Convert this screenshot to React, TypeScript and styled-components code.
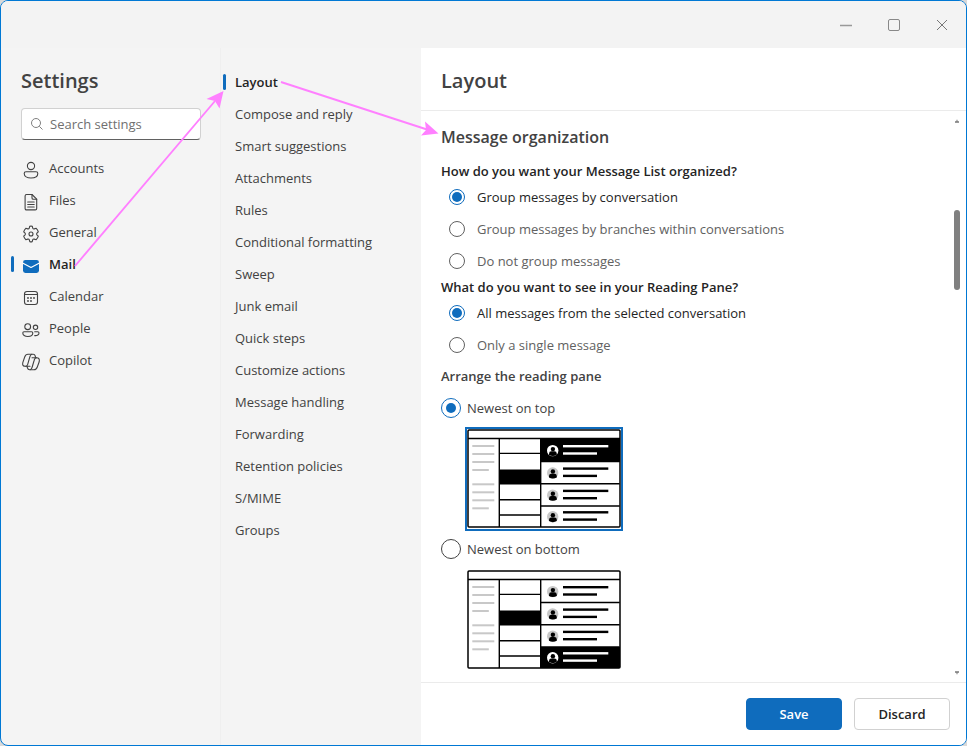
import React, { useState } from "react";
import styled, { createGlobalStyle, css } from "styled-components";

const BLUE = "#0f6cbd";
const INK = "#424242";

const GlobalStyle = createGlobalStyle`
  * { box-sizing: border-box; }
  html, body { margin: 0; padding: 0; background: #d9d9d9; }
  body, button, input {
    font-family: "Open Sans", "Noto Sans", sans-serif;
    font-size: 13px;
    line-height: 20px;
    color: ${INK};
  }
`;

const Window = styled.div`
  position: relative;
  display: flex;
  flex-direction: column;
  min-height: 100vh;
  border: 1px solid #0078d4;
  border-radius: 8px;
  background: #f4f4f4;
  overflow: hidden;
`;

const TitleBar = styled.header`
  display: flex;
  justify-content: flex-end;
  height: 47px;
  background: #f3f3f3;
`;

const CaptionButton = styled.button`
  display: grid;
  place-items: center;
  width: 48px;
  padding: 0;
  border: 0;
  background: none;
`;

const Body = styled.div`
  display: grid;
  grid-template-columns: 220px 200px minmax(0, 1fr);
  flex: 1;
`;

const Sidebar = styled.nav`
  display: flex;
  flex-direction: column;
  border-right: 1px solid #efefef;
`;

const Title = styled.h1`
  margin: 0;
  padding: 19px 20px 13px;
  font-size: 20px;
  line-height: 28px;
  font-weight: 600;
`;

const SearchBox = styled.label`
  display: flex;
  align-items: center;
  gap: 6px;
  height: 32px;
  margin: 0 19px 12px 20px;
  padding: 0 8px;
  border: 1px solid #d1d1d1;
  border-bottom-color: #616161;
  border-radius: 4px;
  background: #fff;
`;

const SearchInput = styled.input`
  flex: 1;
  min-width: 0;
  padding: 0;
  border: 0;
  outline: 0;
  background: none;
  &::placeholder { color: #707070; opacity: 1; }
`;

const NavLink = styled.a<{ $active?: boolean; $compact?: boolean }>`
  display: flex;
  align-items: center;
  height: 32px;
  padding-left: ${(p) => (p.$compact ? 2 : 10)}px;
  color: ${INK};
  text-decoration: none;
  &::before {
    content: "";
    width: 3px;
    height: 16px;
    margin-right: ${(p) => (p.$compact ? 9 : 8)}px;
    border-radius: 2px;
  }
  ${(p) =>
    p.$active &&
    css`
      color: #242424;
      font-weight: 600;
      &::before { background: ${BLUE}; }
    `}
`;

const NavIcon = styled.svg`
  width: 18px;
  height: 18px;
  margin: 4px 9px 0 0;
  flex: none;
  overflow: visible;
  fill: none;
  stroke: #424242;
  stroke-width: 1.1;
  stroke-linecap: round;
  stroke-linejoin: round;
`;

const SubNav = styled.nav`
  padding-top: 18px;
`;

const Pane = styled.main`
  display: flex;
  flex-direction: column;
  background: #fff;
`;

const PaneHeader = styled.div`
  border-bottom: 1px solid #ebebeb;
  height: 63px;
`;

const ScrollArea = styled.div`
  display: flex;
  flex: 1;
`;

const Content = styled.div`
  flex: 1;
  padding: 14px 20px 2px;
`;

const ScrollTrack = styled.div`
  display: flex;
  flex-direction: column;
  align-items: center;
  width: 18px;
  padding: 8px 0 7px;
`;

const Thumb = styled.div`
  width: 6px;
  height: 80px;
  margin: 87px 0 auto;
  border-radius: 3px;
  background: #808080;
`;

const SectionTitle = styled.h2`
  margin: 0 0 12px;
  font-size: 16px;
  line-height: 24px;
  font-weight: 600;
`;

const Group = styled.fieldset`
  margin: 0;
  padding: 0;
  border: 0;
`;

const Question = styled.legend<{ $soft?: boolean }>`
  padding: ${(p) => (p.$soft ? "5px 0 12px" : 0)};
  font-weight: 600;
  color: ${(p) => (p.$soft ? INK : "#242424")};
`;

const Option = styled.label<{ $checked: boolean }>`
  display: flex;
  align-items: center;
  gap: 12px;
  height: 32px;
  padding-left: 8px;
  color: ${(p) => (p.$checked ? "#242424" : "#616161")};
`;

const LargeOption = styled.label`
  display: flex;
  align-items: center;
  gap: 6px;
  height: 20px;
`;

const Radio = styled.input.attrs({ type: "radio" })<{ $large?: boolean }>`
  appearance: none;
  display: grid;
  place-items: center;
  flex: none;
  width: ${(p) => (p.$large ? 20 : 16)}px;
  height: ${(p) => (p.$large ? 20 : 16)}px;
  margin: 0;
  border: 1px solid ${(p) => (p.$large ? "#424242" : "#616161")};
  border-radius: 50%;
  background: #fff;
  &:checked { border-color: ${BLUE}; }
  &:checked::before {
    content: "";
    width: 10px;
    height: 10px;
    border-radius: 50%;
    background: ${BLUE};
  }
`;

const Preview = styled.div<{ $selected: boolean }>`
  width: 158px;
  height: 104px;
  margin: 9px 0 8px 24px;
  border: 2px solid ${(p) => (p.$selected ? BLUE : "transparent")};
`;

const Picture = styled.svg`
  display: block;
  width: 154px;
  height: 99px;
`;

const Footer = styled.footer`
  display: flex;
  justify-content: flex-end;
  gap: 12px;
  padding: 15px 16px;
  border-top: 1px solid #ebebeb;
`;

const Button = styled.button<{ $primary?: boolean }>`
  width: 96px;
  height: 32px;
  padding: 0;
  border: 1px solid ${(p) => (p.$primary ? BLUE : "#d1d1d1")};
  border-radius: 4px;
  background: ${(p) => (p.$primary ? BLUE : "#fff")};
  color: ${(p) => (p.$primary ? "#fff" : "#242424")};
  font-weight: 600;
`;

const Arrows = styled.svg`
  position: absolute;
  top: 0;
  left: 0;
  width: 460px;
  height: 300px;
  pointer-events: none;
`;

const icons: Record<string, React.ReactNode> = {
  Accounts: (
    <>
      <circle cx="9" cy="5" r="3.6" />
      <path d="M4 10.700h10c1 0 1.800.8 1.800 1.800 0 2.800-3 4.500-6.800 4.500s-6.800-1.700-6.800-4.500c0-1 .8-1.800 1.800-1.800z" />
    </>
  ),
  Files: (
    <>
      <path d="M4.500 1.500h5.500l4.700 4.700v9.300c0 .8-.6 1.400-1.400 1.400H4.500c-.8 0-1.400-.6-1.400-1.400V2.900c0-.8.6-1.400 1.400-1.400z" />
      <path d="M10 1.500v3.400c0 .8.500 1.300 1.300 1.300h3.400M5.700 9h6.500M5.700 11.500h6.500M5.700 14h6.500" />
    </>
  ),
  General: (
    <>
      <path d="M7.700 1.300 Q9 1 10.300 1.300 L10.800 3.300 Q11.300 4.100 12.200 3.900 L14.200 3.300 Q15.800 4.900 16.300 6.800 L14.900 8.100 Q14.300 9 14.900 9.900 L16.300 11.200 Q15.700 13.300 14.200 14.700 L12.200 14.100 Q11.100 13.900 10.700 14.800 L10.200 16.700 Q9 17 7.800 16.700 L7.300 14.800 Q6.900 13.900 5.800 14.100 L3.800 14.700 Q2.300 13.200 1.700 11.200 L3.100 9.900 Q3.700 9 3.100 8.100 L1.700 6.800 Q2.300 4.800 3.800 3.300 L5.800 3.900 Q6.800 4.100 7.200 3.300 Z" />
      <circle cx="9" cy="9" r="2" />
    </>
  ),
  Mail: (
    <>
      <rect x="1" y="3" width="16" height="13" rx="2.400" fill={BLUE} stroke="none" />
      <path d="M1 6.200l8 4.300 8-4.300" stroke="#fff" strokeWidth="1.200" />
    </>
  ),
  Calendar: (
    <>
      <rect x="2.500" y="2.500" width="13" height="13" rx="2.500" />
      <path d="M2.500 5.500h13" />
      <g fill={INK} stroke="none">
        <circle cx="6" cy="9" r=".9" />
        <circle cx="9" cy="9" r=".9" />
        <circle cx="12" cy="9" r=".9" />
        <circle cx="6" cy="12" r=".9" />
        <circle cx="9" cy="12" r=".9" />
      </g>
    </>
  ),
  People: (
    <>
      <circle cx="5.700" cy="5.700" r="2.900" />
      <circle cx="13.500" cy="6.300" r="2.200" />
      <path d="M2 10.700h7.600c.7 0 1.200.6 1.200 1.300 0 2-2 3.500-5 3.500S.8 14 .8 12c0-.7.500-1.300 1.200-1.300zM12.700 10.700h3c.8 0 1.300.5 1.300 1.200 0 1.800-1.700 3-4.300 2.700" />
    </>
  ),
  Copilot: (
    <>
      <path d="M8 13.300H3.500C1 13.300.2 12 .8 9.700L2.700 4C3.300 2.200 4.400 1.300 6 1.300h5.200c1.200 0 1.700.6 2 1.700l.5 1.800" />
      <path d="M9.800 1.300C8.700 1.500 8.200 2.500 7.800 4L5.700 11.300C5.300 12.600 4.800 13.300 3.700 13.300" />
      <path d="M10 4.800h4.500c2.500 0 3.300 1.500 2.700 4L15.300 14c-.6 1.800-1.700 2.700-3.300 2.700H7.500c-1.200 0-1.700-.6-2-1.700L5 13.300" />
      <path d="M8.200 16.700c1.100-.2 1.600-1.200 2-2.700l1.900-6.500c.5-2 1-2.700 2.400-2.700" />
    </>
  ),
};

const subItems = [
  "Layout", "Compose and reply", "Smart suggestions", "Attachments", "Rules",
  "Conditional formatting", "Sweep", "Junk email", "Quick steps",
  "Customize actions", "Message handling", "Forwarding",
  "Retention policies", "S/MIME", "Groups",
];

function PanePicture({ dark }: { dark: number }) {
  const rows = [10, 32.5, 54.8, 77];
  return (
    <Picture viewBox="0 0 154 99" aria-hidden="true">
      <rect x="1" y="1" width="152" height="97" rx="1" fill="#fff" stroke="#000" strokeWidth="1.500" />
      <path d="M1 9.500h152M32.300 9.500V98M73.700 9.500V98M32.300 24.400h41.400M32.300 70.700h41.400M32.300 86h41.400M73.700 32.500h79M73.700 54.800h79M73.700 77h79" stroke="#000" strokeWidth="1.400" />
      <rect x="32" y="40.500" width="42" height="15" />
      {[17, 25, 33, 41, 55.3, 63.3, 71.3, 79.3].map((y, i) => (
        <rect key={y} x="5.300" y={y - 1} width={i % 4 === 3 ? 16.5 : 22} height="2" fill="#c8c8c8" />
      ))}
      {rows.map((y, i) => {
        const on = i === dark;
        const mark = on ? "#fff" : "#000";
        const c = [21.6, 44, 66.3, 87.7][i];
        return (
          <g key={y}>
            {on && <rect x="73.700" y={y} width="79.300" height={i === 3 ? 21 : 22.8} />}
            <circle cx="85.700" cy={c} r="5.700" fill={on ? "#fff" : "#c8c8c8"} />
            <circle cx="85.900" cy={c - 1.5} r="2.200" />
            <path d={`M82 ${c + 4.4}v-1.3q0-2.400 2.400-2.400h3q2.400 0 2.400 2.400v1.300q-4 2.200-7.800 0z`} />
            <rect x="96" y={c - 5.6} width="45.300" height="2.400" fill={mark} />
            <rect x="96" y={c + 1.7} width="34" height="2.400" fill={mark} />
          </g>
        );
      })}
    </Picture>
  );
}

function RadioGroup({ name, question, options }: { name: string; question: string; options: string[] }) {
  const [value, setValue] = useState(options[0]);
  return (
    <Group>
      <Question>{question}</Question>
      {options.map((o) => (
        <Option key={o} $checked={o === value}>
          <Radio name={name} checked={o === value} onChange={() => setValue(o)} />
          {o}
        </Option>
      ))}
    </Group>
  );
}

export default function App() {
  const [order, setOrder] = useState(0);
  return (
    <>
      <GlobalStyle />
      <Window>
        <TitleBar>
          <CaptionButton aria-label="Minimize">
            <svg width="14" height="14"><path d="M1 7.500h12" stroke="#999" strokeWidth="1.500" /></svg>
          </CaptionButton>
          <CaptionButton aria-label="Maximize">
            <svg width="14" height="14"><rect x="1.500" y="1.500" width="11" height="11" rx="1.500" fill="none" stroke="#888" /></svg>
          </CaptionButton>
          <CaptionButton aria-label="Close">
            <svg width="14" height="14"><path d="M2 2l10 10M12 2L2 12" stroke="#777" /></svg>
          </CaptionButton>
        </TitleBar>
        <Body>
          <Sidebar aria-label="Settings">
            <Title>Settings</Title>
            <SearchBox>
              <svg width="14" height="14" fill="none" stroke="#808080" aria-hidden="true">
                <circle cx="6" cy="6" r="4.500" />
                <path d="M9.300 9.300l3.200 3.200" />
              </svg>
              <SearchInput type="text" placeholder="Search settings" aria-label="Search settings" />
            </SearchBox>
            {Object.keys(icons).map((name) => (
              <NavLink key={name} href="#" $active={name === "Mail"}>
                <NavIcon viewBox="0 0 18 18" aria-hidden="true">{icons[name]}</NavIcon>
                {name}
              </NavLink>
            ))}
          </Sidebar>
          <SubNav aria-label="Mail">
            {subItems.map((name, i) => (
              <NavLink key={name} href="#" $compact $active={i === 0}>{name}</NavLink>
            ))}
          </SubNav>
          <Pane>
            <PaneHeader><Title as="h2">Layout</Title></PaneHeader>
            <ScrollArea>
              <Content>
                <SectionTitle>Message organization</SectionTitle>
                <RadioGroup
                  name="list"
                  question="How do you want your Message List organized?"
                  options={["Group messages by conversation", "Group messages by branches within conversations", "Do not group messages"]}
                />
                <RadioGroup
                  name="reading"
                  question="What do you want to see in your Reading Pane?"
                  options={["All messages from the selected conversation", "Only a single message"]}
                />
                <Group>
                  <Question $soft>Arrange the reading pane</Question>
                  {["Newest on top", "Newest on bottom"].map((label, i) => (
                    <React.Fragment key={label}>
                      <LargeOption>
                        <Radio $large name="order" checked={order === i} onChange={() => setOrder(i)} />
                        {label}
                      </LargeOption>
                      <Preview $selected={order === i}><PanePicture dark={i === 0 ? 0 : 3} /></Preview>
                    </React.Fragment>
                  ))}
                </Group>
              </Content>
              <ScrollTrack aria-hidden="true">
                <svg width="6" height="4"><path d="M1 3h4M2.500 1.500h1" fill="none" stroke="#777" strokeWidth="1.500" /></svg>
                <Thumb />
                <svg width="6" height="4"><path d="M1 1h4M2.500 2.500h1" fill="none" stroke="#777" strokeWidth="1.500" /></svg>
              </ScrollTrack>
            </ScrollArea>
            <Footer>
              <Button $primary>Save</Button>
              <Button>Discard</Button>
            </Footer>
          </Pane>
        </Body>
        <Arrows viewBox="1 1 460 300" aria-hidden="true">
          <g stroke="#ff80ff" strokeWidth="1.900" fill="none">
            <path d="M75 266L215 101M281 82l146 47.500" />
          </g>
          <path d="M223.500 91l-4 17.500-4.500-7.500-8.500-2zM438.500 133.500l-17.500 2 5-5.500-1-8.500z" fill="#ff80ff" />
        </Arrows>
      </Window>
    </>
  );
}
